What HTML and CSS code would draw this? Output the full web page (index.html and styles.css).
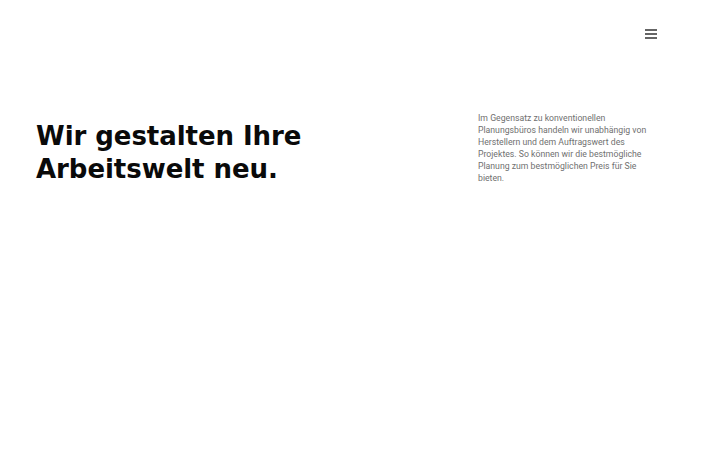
FILE: index.html
```html
<!DOCTYPE html>
<html lang="de">
<head>
<meta charset="utf-8">
<link rel="stylesheet" href="styles.css">
</head>
<body>
<header class="topbar">
  <button class="menu" aria-label="Menü">
    <svg width="12" height="10" viewBox="0 0 12 10"><path d="M0 1h12M0 5h12M0 9h12" stroke="#333" stroke-width="1.3"/></svg>
  </button>
</header>
<main class="hero">
  <h1 class="title">Wir gestalten Ihre<br>Arbeitswelt neu.</h1>
  <p class="lead">Im Gegensatz zu konventionellen Planungsbüros handeln wir unabhängig von Herstellern und dem Auftragswert des Projektes. So können wir die bestmögliche Planung zum bestmöglichen Preis für Sie bieten.</p>
</main>
</body>
</html>
```
FILE: styles.css
```css
html, body { margin: 0; padding: 0; background: #fff; }
body { font-family: Inter, "Noto Sans", sans-serif; color: #111; }
.topbar { display: flex; justify-content: flex-end; padding: 29px 63px 0 0; height: 21px; }
.menu { border: 0; background: none; padding: 0; width: 12px; height: 10px; display: block; }
.menu svg { display: block; }
.hero { display: flex; justify-content: space-between; align-items: flex-start; padding: 62px 62px 0 36px; }
.title { margin: 0; font-family: "DejaVu Sans", sans-serif; font-size: 26px; line-height: 32.5px; font-weight: 700; letter-spacing: -0.05px; color: #0a0a0a; padding-top: 8px; }
.lead { margin: 0; width: 180px; font-family: Roboto, sans-serif; font-size: 8.7px; line-height: 12px; color: #707070; }
```
